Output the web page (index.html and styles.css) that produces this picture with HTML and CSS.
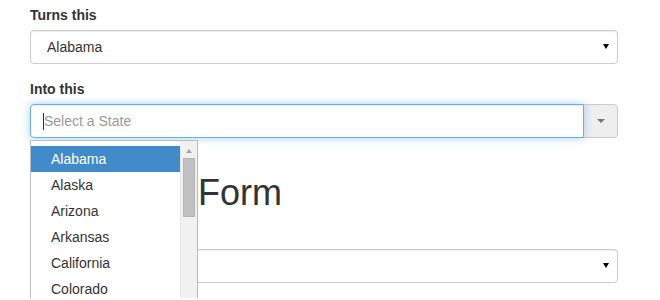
FILE: index.html
```
<!DOCTYPE html>
<html>
<head>
<meta charset="utf-8">
<link rel="stylesheet" href="styles.css">
</head>
<body>
<div class="page">
  <div class="form-group">
    <label class="lbl">Turns this</label>
    <div class="select-wrap">
      <select class="form-select"><option>Alabama</option></select>
    </div>
  </div>
  <div class="form-group">
    <label class="lbl">Into this</label>
    <div class="input-group">
      <div class="combo"><span class="cursor"></span><span class="placeholder">Select a State</span></div>
      <span class="addon"><span class="caret"></span></span>
      <div class="dropdown">
        <ul class="results">
          <li class="active">Alabama</li>
          <li>Alaska</li>
          <li>Arizona</li>
          <li>Arkansas</li>
          <li>California</li>
          <li>Colorado</li>
          <li>Connecticut</li>
        </ul>
        <div class="scrollbar">
          <span class="arrow-up"></span>
          <span class="thumb"></span>
        </div>
      </div>
    </div>
  </div>
  <h2 class="title">Bootstrap Form</h2>
  <div class="form-group">
    <label class="lbl">State</label>
    <div class="select-wrap">
      <select class="form-select"><option>Alabama</option></select>
    </div>
  </div>
</div>
</body>
</html>
```
FILE: styles.css
```
* { box-sizing: border-box; }
html, body { margin: 0; padding: 0; background: #fff; }
body {
  font-family: "Liberation Sans", Arial, sans-serif;
  font-size: 14px;
  line-height: 20px;
  color: #333;
  overflow: hidden;
}
.page {
  width: 618px;
  padding: 5px 0 0 30px;
}
.form-group { margin-bottom: 15px; }
.lbl {
  display: block;
  font-weight: bold;
  font-size: 14px;
  line-height: 20px;
  margin-bottom: 5px;
}
.select-wrap { position: relative; }
.select-wrap::after {
  content: "";
  position: absolute;
  right: 9px;
  top: 14px;
  border-left: 3.5px solid transparent;
  border-right: 3.5px solid transparent;
  border-top: 5px solid #000;
}
.form-select {
  -webkit-appearance: none;
  appearance: none;
  display: block;
  width: 100%;
  height: 34px;
  padding: 6px 16px;
  font-family: inherit;
  font-size: 14px;
  line-height: 20px;
  color: #333;
  background: #fff;
  border: 1px solid #ccc;
  border-radius: 4px;
  box-shadow: inset 0 1px 1px rgba(0,0,0,.075);
}
.input-group {
  position: relative;
  display: flex;
  height: 34px;
}
.combo {
  flex: 1;
  display: flex;
  align-items: center;
  padding: 6px 12px;
  border: 1px solid #66afe9;
  border-radius: 4px 0 0 4px;
  box-shadow: inset 0 1px 1px rgba(0,0,0,.075), 0 0 8px rgba(102,175,233,.6);
  background: #fff;
  position: relative;
  z-index: 1;
}
.cursor {
  width: 1px;
  height: 17px;
  background: #333;
}
.placeholder { color: #999; }
.addon {
  width: 35px;
  margin-left: -1px;
  display: flex;
  align-items: center;
  justify-content: center;
  background: #eee;
  border: 1px solid #ccc;
  border-radius: 0 4px 4px 0;
}
.caret {
  border-left: 4px solid transparent;
  border-right: 4px solid transparent;
  border-top: 4px solid #777;
}
.dropdown {
  position: absolute;
  left: 0;
  top: 36px;
  width: 168px;
  height: 200px;
  display: flex;
  background: #fff;
  border: 1px solid #bbb;
  border-bottom: none;
  z-index: 5;
  overflow: hidden;
}
.results {
  list-style: none;
  margin: 0;
  padding: 5px 0 0;
  width: 149px;
}
.results li {
  padding: 3px 6px 3px 20px;
  line-height: 20px;
  color: #333;
}
.results li.active {
  background: #428bca;
  color: #fff;
}
.scrollbar {
  width: 17px;
  background: #f1f1f1;
  border-left: 1px solid #e6e6e6;
  display: flex;
  flex-direction: column;
  align-items: center;
  padding-top: 8px;
}
.arrow-up {
  border-left: 3.5px solid transparent;
  border-right: 3.5px solid transparent;
  border-bottom: 4px solid #a3a3a3;
}
.thumb {
  margin-top: 5px;
  width: 12px;
  height: 59px;
  background: #c1c1c1;
  border: 1px solid #b5b5b5;
}
.title {
  margin: 35px 0 11px;
  font-size: 36px;
  font-weight: normal;
  line-height: 1.1;
  word-spacing: 4px;
  color: #333;
}
```
